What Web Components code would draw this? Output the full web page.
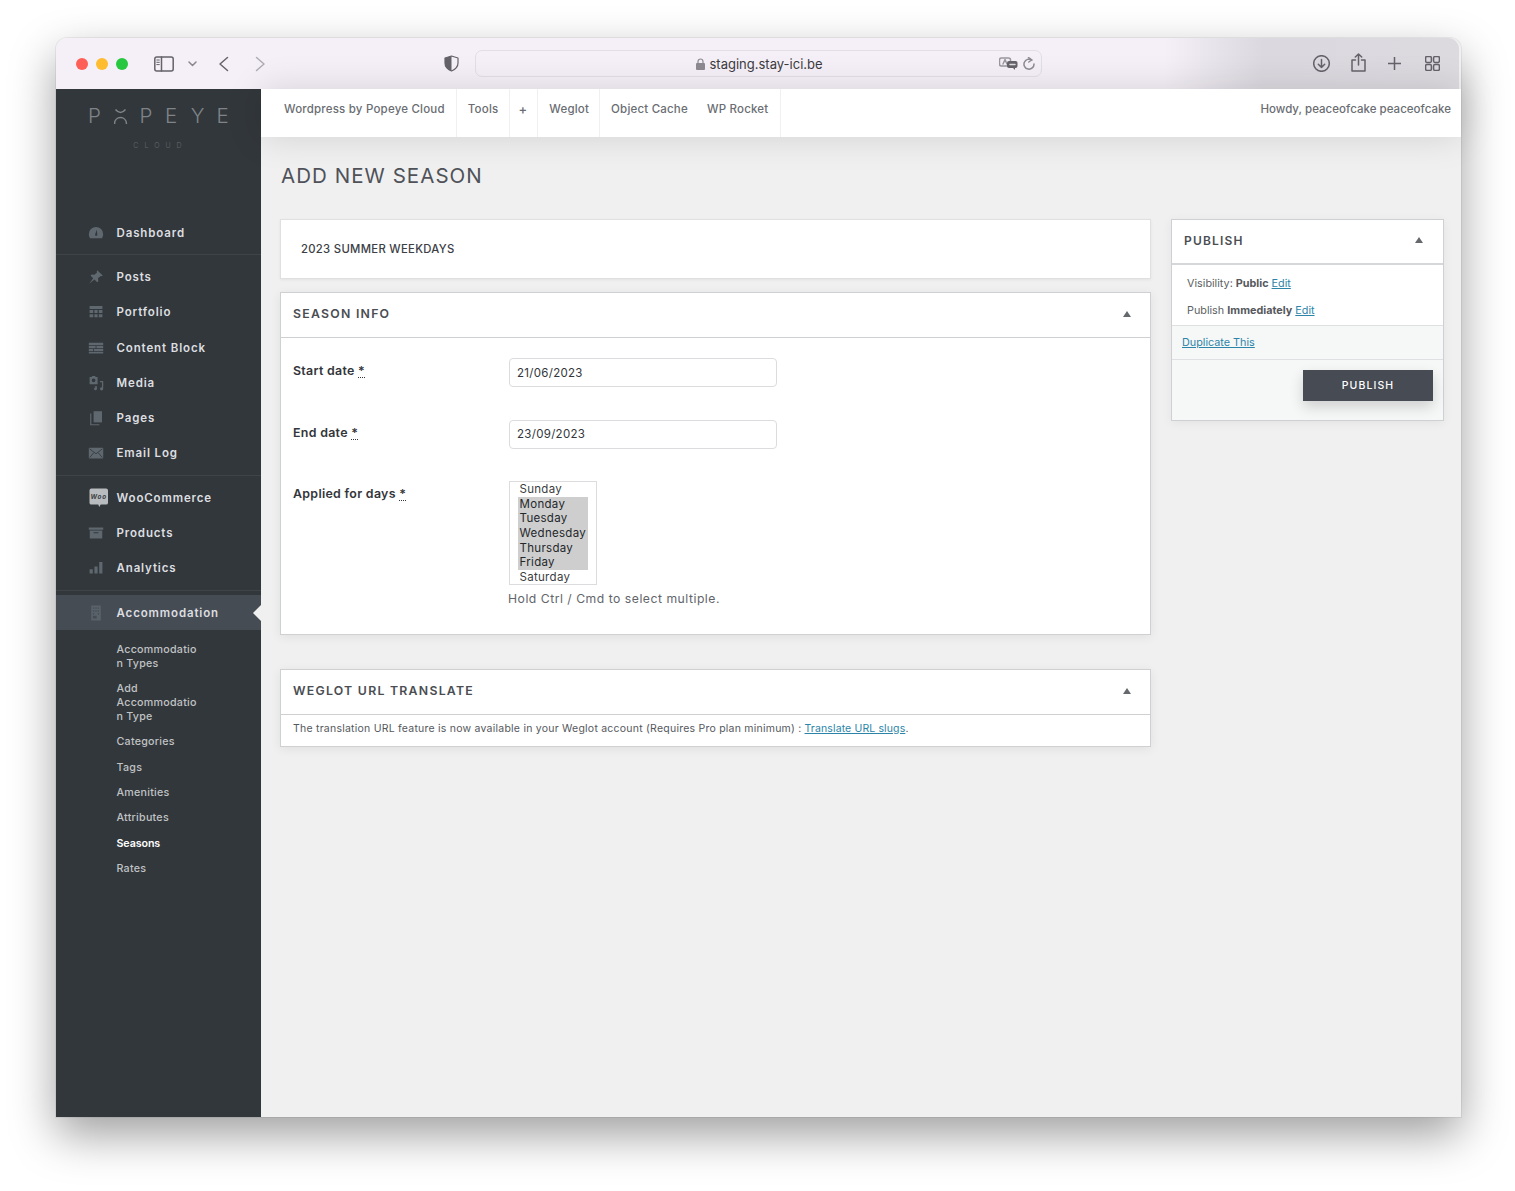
<!DOCTYPE html>
<html lang="en">
<head>
<meta charset="utf-8">
<title>Add New Season</title>
<style>
  html, body { margin: 0; height: 1191px; overflow: hidden; background: #fff; }
  body { font-family: "Inter", "Liberation Sans", sans-serif; }
</style>
</head>
<body>
<browser-window>
  <browser-toolbar slot="toolbar" url="staging.stay-ici.be"></browser-toolbar>
  <side-menu slot="side">
    <menu-item icon="dash" label="Dashboard"></menu-item>
    <menu-sep></menu-sep>
    <menu-item icon="pin" label="Posts"></menu-item>
    <menu-item icon="grid" label="Portfolio"></menu-item>
    <menu-item icon="blocks" label="Content Block"></menu-item>
    <menu-item icon="media" label="Media"></menu-item>
    <menu-item icon="pages" label="Pages"></menu-item>
    <menu-item icon="mail" label="Email Log"></menu-item>
    <menu-sep></menu-sep>
    <menu-item icon="woo" label="WooCommerce"></menu-item>
    <menu-item icon="box" label="Products"></menu-item>
    <menu-item icon="bars" label="Analytics"></menu-item>
    <menu-sep></menu-sep>
    <menu-item icon="building" label="Accommodation" active></menu-item>
    <sub-menu>
      <a>Accommodatio<br>n Types</a>
      <a>Add<br>Accommodatio<br>n Type</a>
      <a>Categories</a>
      <a>Tags</a>
      <a>Amenities</a>
      <a>Attributes</a>
      <a class="current">Seasons</a>
      <a>Rates</a>
    </sub-menu>
  </side-menu>
  <admin-bar slot="bar">
    <bar-link>Wordpress by Popeye Cloud</bar-link>
    <bar-link>Tools</bar-link>
    <bar-link class="plus">+</bar-link>
    <bar-link class="weglot">Weglot</bar-link>
    <bar-link plain>Object Cache</bar-link>
    <bar-link class="last">WP Rocket</bar-link>
    <span slot="user">Howdy, peaceofcake peaceofcake</span>
  </admin-bar>
  <season-editor heading="Add New Season">
    <title-box value="2023 Summer Weekdays"></title-box>
    <meta-box heading="Season Info">
      <season-form>
        <form-row label="Start date"><date-field value="21/06/2023"></date-field></form-row>
        <form-row label="End date"><date-field value="23/09/2023"></date-field></form-row>
        <form-row label="Applied for days" class="days"><day-list></day-list></form-row>
      </season-form>
    </meta-box>
    <meta-box heading="Weglot URL Translate" style="margin-top:34px">
      <weglot-note></weglot-note>
    </meta-box>
    <publish-box slot="aside"></publish-box>
  </season-editor>
</browser-window>

<script>
// small helper so every element only has to hand over its html
class Base extends HTMLElement {
  constructor() {
    super();
    this.attachShadow({ mode: 'open' });
  }
  connectedCallback() {
    this.shadowRoot.innerHTML = this.render();
  }
}

class BrowserWindow extends Base {
  render() {
    return `
      <style>
        :host {
          display: flex;
          flex-direction: column;
          width: 1405px;
          height: 1079px;
          margin: 38px 0 0 56px;
          border-radius: 11px 11px 0 0;
          background: #f0f0f1;
          box-shadow: 0 0 0 1px rgba(0,0,0,.06), 0 18px 46px rgba(0,0,0,.38);
        }
        .main { flex: 1; display: flex; min-height: 0; }
        .right { flex: 1; display: flex; flex-direction: column; min-width: 0; }
      </style>
      <slot name="toolbar"></slot>
      <div class="main">
        <slot name="side"></slot>
        <div class="right">
          <slot name="bar"></slot>
          <slot></slot>
        </div>
      </div>`;
  }
}

class BrowserToolbar extends Base {
  render() {
    return `
      <style>
        :host {
          display: flex;
          align-items: center;
          height: 51px;
          margin-right: 2px;
          border-radius: 11px 11px 0 0;
          background: linear-gradient(90deg, #f5f0f7 0, #f5f0f7 79%, #dbd8df 86%, #dcd9df 100%);
          box-sizing: border-box;
        }
        .dot { width: 12px; height: 12px; border-radius: 50%; margin-right: 8px; margin-top: 1px; }
        svg { display: block; fill: none; stroke: #65626a; stroke-width: 1.5; stroke-linecap: round; stroke-linejoin: round; flex: none; }
        .url {
          display: flex; align-items: center; box-sizing: border-box;
          width: 567px; height: 27px; margin-left: 16px;
          border: 1px solid #e2dee5; border-radius: 7px;
          font: 13px "Inter", sans-serif; color: #3d3b40;
        }
      </style>
      <span class="dot" style="background:#fe5f57;margin-left:20px"></span>
      <span class="dot" style="background:#febc2e"></span>
      <span class="dot" style="background:#27c840"></span>
      <svg style="margin-left:18px" width="20" height="16" viewBox="0 0 20 16" stroke-width="1.3"><rect x=".8" y="1" width="18.4" height="14" rx="2"/><path d="M7.5 1v14"/><path d="M2.8 4h2.5M2.8 6.3h2.5M2.8 8.6h2.5" stroke-width="1"/></svg>
      <svg style="margin-left:14px;stroke:#8a878e" width="9" height="6" viewBox="0 0 9 6"><path d="M1 1l3.5 3.5L8 1"/></svg>
      <svg style="margin-left:21px" width="11" height="16" viewBox="0 0 11 16" stroke-width="1.7"><path d="M9.5 1.5L2 8l7.5 6.5"/></svg>
      <svg style="margin-left:26px;stroke:#aeabb2" width="11" height="16" viewBox="0 0 11 16" stroke-width="1.7"><path d="M1.5 1.5L9 8l-7.5 6.5"/></svg>
      <svg style="margin-left:178px" width="15" height="17" viewBox="0 0 15 17"><path stroke-width="1.2" d="M7.5 1L14 3v5c0 4-3 6.500-6.500 8C4 14.500 1 12 1 8V3z"/><path stroke="none" fill="#65626a" d="M7.500 1L1 3v5c0 4 3 6.500 6.500 8z"/></svg>
      <div class="url">
        <svg style="margin-left:220px;stroke:none" width="9" height="12" viewBox="0 0 9 12"><rect fill="#8d8a91" y="5" width="9" height="7" rx="1"/><path fill="none" stroke="#8d8a91" stroke-width="1.2" d="M2 5V3.500a2.500 2.500 0 015 0V5"/></svg>
        <span style="margin-left:4.500px">${this.getAttribute('url')}</span>
        <svg style="margin-left:176px" width="19" height="13" viewBox="0 0 19 13" stroke-width="1"><rect x=".5" y="1" width="11" height="8" rx="2" stroke="#9a979e"/><path d="M4 7l2-4.500L8 7" stroke="#9a979e"/><rect stroke="none" fill="#66636a" x="8" y="4" width="10.500" height="7" rx="2"/><path stroke="none" fill="#66636a" d="M13 10h3v3z"/><path stroke="#ddd" d="M11 7.500h5"/></svg>
        <svg style="margin-left:5px;stroke:#8d8a91" width="12" height="13" viewBox="0 0 12 13" stroke-width="1"><path d="M8.800 3A5 5 0 1 0 11 7"/><path d="M5.500 .5L8.800 3 5.800 5"/></svg>
      </div>
      <svg style="margin-left:271px" width="17" height="17" viewBox="0 0 17 17" stroke-width="1.2"><circle cx="8.500" cy="8.500" r="7.800"/><path d="M8.500 4.500v8M5.300 9.300l3.200 3.200 3.200-3.200"/></svg>
      <svg style="margin-left:21px;margin-top:-3px" width="15" height="19" viewBox="0 0 15 19" stroke-width="1.2"><path d="M4.500 7H1v11h13V7h-3.500M7.500 12V1M4.300 4L7.500 1l3.200 3"/></svg>
      <svg style="margin-left:22px" width="13" height="13" viewBox="0 0 13 13" stroke-width="1.3"><path d="M6.500 0v13M0 6.500h13"/></svg>
      <svg style="margin-left:24px" width="15" height="15" viewBox="0 0 15 15" stroke-width="1.1"><rect x=".6" y=".6" width="5.800" height="5.800" rx="1.300"/><rect x="8.600" y=".6" width="5.800" height="5.800" rx="1.300"/><rect x=".6" y="8.600" width="5.800" height="5.800" rx="1.300"/><rect x="8.600" y="8.600" width="5.800" height="5.800" rx="1.300"/></svg>`;
  }
}

class SideMenu extends Base {
  render() {
    return `
      <style>
        :host { display: block; width: 205px; flex: none; background: #32373b; color: #dcdee0; }
        .logo { height: 109px; padding-top: 17px; color: #7f8488; }
        .word { display: flex; margin-left: 32px; font: 300 20.500px/20px "Inter", sans-serif; }
        .word span, .word svg { width: 25.700px; flex: none; }
        .cloud { margin-top: 15px; text-align: center; font: 300 7px/10px "Inter", sans-serif; letter-spacing: 6px; color: #62676b; padding-left: 4px; }
      </style>
      <div class="logo">
        <div class="word">
          <span>P</span>
          <svg height="20" viewBox="0 0 25.700 20" fill="none" stroke="currentColor" stroke-width="1.500"><path d="M1.500 3.500Q6.500 9.500 11.500 3.500M.5 18C.5 9.500 12.500 9.500 12.500 18"/></svg>
          <span>P</span><span>E</span><span>Y</span><span>E</span>
        </div>
        <div class="cloud">CLOUD</div>
      </div>
      <slot></slot>`;
  }
}

const ICONS = {
  dash: '<path d="M10 2.500a9 9 0 0 0-9 9c0 1.800.5 3.300 1.500 5h15c1-1.700 1.500-3.200 1.500-5a9 9 0 0 0-9-9zM9 11.500l2-5.500.6 5.800A1.400 1.400 0 1 1 9 11.500z" fill-rule="evenodd"/>',
  pin: '<path d="M11.500 1.500l7 6.500-1.500 1.200-1-.5-3.500 3 .4 3.800-1.500 1-3.300-3.300L1.500 18.500l5-7-3.200-3 1.200-1.500 3.500.3 3.300-3-.4-1.300z"/>',
  grid: '<path d="M2 2.500h16v3.700H2zM2 7.500h4.500v3.700H2zM8 7.500h4v3.700H8zM13.500 7.500H18v3.700h-4.500zM2 12.700h4.500v4H2zM8 12.700h4v4H8zM13.500 12.700H18v4h-4.500z"/>',
  blocks: '<path d="M1 3.500h18v3H1zM1 7.500h8.500v2.700H1zM10.500 7.500H19v2.700h-8.500zM1 11.200h5.500V14H1zM7.500 11.200H19V14H7.500zM1 15h18v1.800H1z"/>',
  media: '<path d="M2 2.500h2.500l.8-1.200h3.500l.8 1.200H12v9H2zM7 4.400a2.300 2.300 0 1 0 0 4.600 2.300 2.300 0 0 0 0-4.600z" fill-rule="evenodd"/><path d="M15 7.500h4v9.800a2 2 0 1 1-1.600-2V9h-2.400zM8.500 14h2.700v3.300a1.800 1.800 0 1 1-1.300-1.700V15.300H8.500z"/>',
  pages: '<path d="M7 1.500h10.500v14H7z"/><path d="M4.200 4.500v13.200h10v1.500H2.700V4.500z"/>',
  mail: '<rect x="1" y="3.500" width="18" height="13.500" rx=".8"/><path d="M2 4.800l8 6.200 8-6.200M2 15.800l5.500-6.500M18 15.800l-5.500-6.500" fill="none" stroke="#32373b" stroke-width="1"/>',
  box: '<path d="M1 3h18v2.800H1zM2.200 7h15.600v10H2.200zM7 9v1.300h6V9z" fill-rule="evenodd"/>',
  bars: '<path d="M2 11.500h4v5.500H2zM8 8h4v9H8zM14 2.500h4V17h-4z"/>',
  building: '<path d="M4 .5h12v19H4zM6.200 3v1.800h1.600V3zM9.200 3v1.800h1.600V3zM12.200 3v1.800h1.600V3zM6.200 6.500v1.800h1.600V6.500zM9.200 6.500v1.800h1.600V6.500zM12.200 6.500v1.800h1.600V6.500zM6.200 10v1.800h1.600V10zM12.200 10v1.800h1.600V10zM6.200 13.500v3.500h4.600v-3.500z" fill-rule="evenodd"/>'
};

class MenuItem extends Base {
  render() {
    const name = this.getAttribute('icon');
    const icon = name === 'woo'
      ? `<svg style="margin:0 -5px 0 1.500px;flex:none" width="19.500" height="19.500" viewBox="0 0 20 20"><path fill="#b9bcbe" d="M2.500 .5h15A2 2 0 0 1 19.500 2.500v12.500a2 2 0 0 1-2 2H12l-1.500 2.500L9.500 17h-7a2 2 0 0 1-2-2V2.500a2 2 0 0 1 2-2z"/><text x="10" y="11.500" text-anchor="middle" font-family="Inter" font-weight="700" font-style="italic" font-size="6.500" fill="#3c4145">Woo</text></svg>`
      : `<svg style="flex:none" width="16" height="16" viewBox="0 0 20 20" fill="${this.hasAttribute('active') ? '#596169' : '#5f686f'}">${ICONS[name]}</svg>`;
    return `
      <style>
        :host { display: flex; align-items: center; height: 35.300px; padding-left: 31.500px; position: relative; font: 600 11.500px "Inter", sans-serif; letter-spacing: .87px; color: #dcdee0; }
        :host([active]) { background: #464c54; }
        span { margin-left: 13px; }
        i { position: absolute; right: 0; top: 50%; margin-top: -8px; border: 8px solid transparent; border-left: 0; border-right-color: #f0f0f1; }
      </style>
      ${icon}<span>${this.getAttribute('label')}</span>
      ${this.hasAttribute('active') ? '<i></i>' : ''}`;
  }
}

class MenuSep extends Base {
  render() {
    return `
      <style>
        :host { display: block; height: 1px; margin: 4px 0 4px; background: #3f4448; }
      </style>`;
  }
}

class SubMenu extends Base {
  render() {
    return `
      <style>
        :host { display: flex; flex-direction: column; gap: 11.450px; width: 95px; padding: 12.500px 0 0 60.500px; font: 500 10.700px/13.900px "Inter", sans-serif; letter-spacing: .25px; color: #c0c3c5; }
        ::slotted(a) { display: block; }
        ::slotted(a.current) { color: #fff; font-weight: 600; letter-spacing: -.1px; }
      </style>
      <slot></slot>`;
  }
}

class AdminBar extends Base {
  render() {
    return `
      <style>
        :host { display: flex; height: 48px; background: #fff; padding-left: 12px; padding-right: 10px; justify-content: space-between; box-shadow: 0 0 36px rgba(0,0,0,.13); position: relative; font: 500 11.500px "Inter", sans-serif; color: #6a6d72; letter-spacing: .2px; }
        .links { display: flex; }
        .user { align-self: center; margin-top: -9px; letter-spacing: .03px; }
      </style>
      <div class="links"><slot></slot></div>
      <div class="user"><slot name="user"></slot></div>`;
  }
}

class BarLink extends Base {
  render() {
    return `
      <style>
        :host { display: flex; padding: 0 11px 9px; height: 39px; align-items: center; border-right: 1px solid #f0f0f1; }
        :host([plain]) { border-right: 0; padding-right: 8px; }
        :host(.plus) { padding: 0 10px 9px 8px; font-size: 13px; }
        :host(.weglot) { padding-right: 10px; }
        :host(.last) { padding-right: 12px; }
      </style>
      <slot></slot>`;
  }
}

class SeasonEditor extends Base {
  render() {
    return `
      <style>
        :host { display: block; padding: 23px 16px 0 19px; }
        h1 { margin: 0 0 27px 1px; font: 400 20.500px/32px "Inter", sans-serif; letter-spacing: 1.050px; color: #4f5258; text-transform: uppercase; }
        .cols { display: flex; gap: 20px; align-items: flex-start; }
        .left { width: 871px; flex: none; }
        .right { width: 273px; flex: none; }
      </style>
      <h1>${this.getAttribute('heading')}</h1>
      <div class="cols">
        <div class="left"><slot></slot></div>
        <div class="right"><slot name="aside"></slot></div>
      </div>`;
  }
}

class TitleBox extends Base {
  render() {
    return `
      <style>
        :host { display: flex; align-items: center; box-sizing: border-box; height: 60px; margin-bottom: 13px; padding-left: 20px; background: #fff; border: 1px solid #e0e0e0; box-shadow: 0 1px 3px rgba(0,0,0,.06); font: 500 11.300px "Inter", sans-serif; letter-spacing: .3px; color: #3c4045; text-transform: uppercase; }
      </style>
      ${this.getAttribute('value')}`;
  }
}

class MetaBox extends Base {
  render() {
    return `
      <style>
        :host { display: block; background: #fff; border: 1px solid #cfd0d2; box-shadow: 0 2px 10px rgba(0,0,0,.07); }
        header { display: flex; justify-content: space-between; align-items: center; box-sizing: border-box; height: 45px; padding: 0 19px 3px 12px; border-bottom: 1px solid #cfd0d2; font: 600 12.300px "Inter", sans-serif; letter-spacing: 1.250px; color: #4a4d52; text-transform: uppercase; }
        i { border: 4px solid transparent; border-top: 0; border-bottom: 6px solid #65686d; }
      </style>
      <header>${this.getAttribute('heading')}<i></i></header>
      <slot></slot>`;
  }
}

class SeasonForm extends Base {
  render() {
    return `
      <style>
        :host { display: flex; flex-direction: column; gap: 32.500px; height: 296px; box-sizing: border-box; padding: 20px 0 0 12px; }
      </style>
      <slot></slot>`;
  }
}

class FormRow extends Base {
  render() {
    return `
      <style>
        :host { display: flex; font: 600 12.400px "Inter", sans-serif; color: #33363a; }
        label { width: 216px; flex: none; padding-top: 5px; letter-spacing: .3px; line-height: 15px; }
        abbr { text-decoration: underline dotted; text-underline-offset: 2px; }
      </style>
      <label>${this.getAttribute('label')} <abbr>*</abbr></label>
      <slot></slot>`;
  }
}

class DateField extends Base {
  render() {
    return `
      <style>
        :host { display: flex; align-items: center; box-sizing: border-box; width: 268px; height: 29px; padding-left: 7px; background: #fff; border: 1px solid #dcdcde; border-radius: 4px; font: 400 11.500px "Inter", sans-serif; letter-spacing: .3px; color: #33363a; }
      </style>
      ${this.getAttribute('value')}`;
  }
}

class DayList extends Base {
  render() {
    const days = ['Sunday', 'Monday', 'Tuesday', 'Wednesday', 'Thursday', 'Friday', 'Saturday'];
    const rows = days.map((d, i) => {
      const sel = i > 0 && i < 6;
      return `<div class="${sel ? 'sel' : ''}">${d}</div>`;
    }).join('');
    return `
      <style>
        :host { display: block; font: 400 11.500px "Inter", sans-serif; color: #3a3d41; letter-spacing: .3px; }
        .box { box-sizing: border-box; width: 88px; height: 104px; padding: 0 8px 0 7.500px; background: #fff; border: 1px solid #dcdcde; }
        .box div { height: 14.650px; line-height: 14.650px; padding-left: 2px; white-space: nowrap; }
        .box .sel { background: #cecece; color: #24272a; }
        p { margin: 5.500px 0 0 -1px; font-size: 12.200px; line-height: 15px; letter-spacing: .51px; color: #62656a; white-space: nowrap; }
      </style>
      <div class="box">${rows}</div>
      <p>Hold Ctrl / Cmd to select multiple.</p>`;
  }
}

class WeglotNote extends Base {
  render() {
    return `
      <style>
        :host { display: flex; align-items: center; height: 31px; padding: 0 0 5px 12px; box-sizing: border-box; font: 400 10.500px "Inter", sans-serif; letter-spacing: .23px; color: #55585d; }
        a { color: #2c85a8; margin-left: 3px; text-decoration: underline; letter-spacing: .13px; }
      </style>
      The translation URL feature is now available in your Weglot account (Requires Pro plan minimum) : <a>Translate URL slugs</a>.`;
  }
}

class PublishBox extends Base {
  render() {
    return `
      <style>
        :host { display: block; box-sizing: border-box; height: 202px; background: #f6f7f7; border: 1px solid #cfd0d2; box-shadow: 0 2px 10px rgba(0,0,0,.06); font: 400 10.800px "Inter", sans-serif; color: #5c5f64; }
        header { display: flex; justify-content: space-between; align-items: center; box-sizing: border-box; height: 45px; padding: 0 20px 2px 12px; background: #fff; border-bottom: 2px solid #d6d7d8; font: 600 12px "Inter", sans-serif; letter-spacing: 1.200px; color: #4a4d52; }
        i { border: 4px solid transparent; border-top: 0; border-bottom: 6px solid #65686d; margin-top: -1px; }
        .info { background: #fff; height: 61px; box-sizing: border-box; padding: 12px 0 0 15px; border-bottom: 1px solid #dfe0e1; }
        .info div { height: 27px; line-height: 14px; }
        a { color: #2c85a8; text-decoration: underline; }
        b { font-weight: 700; color: #55585d; }
        .dup { height: 34px; display: flex; align-items: center; padding-left: 10px; border-bottom: 1px solid #dfe0e1; box-sizing: border-box; }
        .act { display: flex; justify-content: flex-end; padding: 10px 10px 0 0; }
        button { width: 130px; height: 31px; border: 0; border-radius: 0; background: #464b54; color: #fff; font: 500 10.500px "Inter", sans-serif; letter-spacing: 1.100px; box-shadow: 0 6px 14px rgba(0,0,0,.16); }
      </style>
      <header>PUBLISH<i></i></header>
      <div class="info">
        <div>Visibility: <b>Public</b> <a>Edit</a></div>
        <div>Publish <b>Immediately</b> <a>Edit</a></div>
      </div>
      <div class="dup"><a>Duplicate This</a></div>
      <div class="act"><button type="button">PUBLISH</button></div>`;
  }
}

customElements.define('browser-window', BrowserWindow);
customElements.define('browser-toolbar', BrowserToolbar);
customElements.define('side-menu', SideMenu);
customElements.define('menu-item', MenuItem);
customElements.define('menu-sep', MenuSep);
customElements.define('sub-menu', SubMenu);
customElements.define('admin-bar', AdminBar);
customElements.define('bar-link', BarLink);
customElements.define('season-editor', SeasonEditor);
customElements.define('title-box', TitleBox);
customElements.define('meta-box', MetaBox);
customElements.define('season-form', SeasonForm);
customElements.define('form-row', FormRow);
customElements.define('date-field', DateField);
customElements.define('day-list', DayList);
customElements.define('weglot-note', WeglotNote);
customElements.define('publish-box', PublishBox);
</script>
</body>
</html>
